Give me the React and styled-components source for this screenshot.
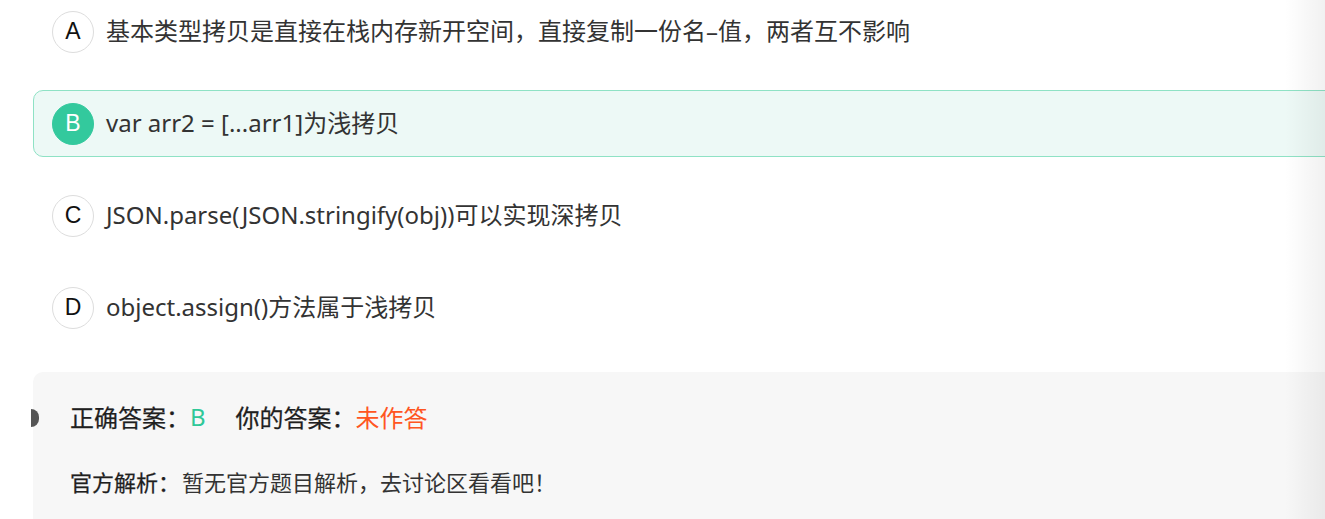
import React from "react";
import styled, { createGlobalStyle } from "styled-components";

const GlobalStyle = createGlobalStyle`
  html, body {
    margin: 0;
    padding: 0;
    background: #ffffff;
    overflow: hidden;
  }
  body {
    font-family: "Noto Sans", "Noto Sans CJK SC", sans-serif;
    color: #333333;
  }
`;

const Page = styled.div`
  position: relative;
  width: 1325px;
  height: 519px;
  overflow: hidden;
`;

const Content = styled.div`
  display: flex;
  flex-direction: column;
  margin-top: -2px;
  margin-left: 33px;
  margin-right: -40px;
`;

const OptionList = styled.div`
  display: flex;
  flex-direction: column;
  gap: 25px;
`;

const Option = styled.div`
  display: flex;
  align-items: center;
  box-sizing: border-box;
  height: 67px;
  padding-left: 18px;
  border: 1px solid ${(p) => (p.$selected ? "#8fe2c5" : "transparent")};
  border-radius: 10px;
  background: ${(p) => (p.$selected ? "#edf9f6" : "transparent")};
`;

const Badge = styled.span`
  box-sizing: border-box;
  flex: none;
  width: 42px;
  height: 42px;
  border-radius: 50%;
  display: flex;
  align-items: center;
  justify-content: center;
  margin-right: 12px;
  font-family: "Liberation Sans", Arial, sans-serif;
  font-size: 23px;
  line-height: 1;
  color: ${(p) => (p.$selected ? "#ffffff" : "#111111")};
  background: ${(p) => (p.$selected ? "#33c99d" : "#ffffff")};
  border: 1px solid ${(p) => (p.$selected ? "#33c99d" : "#dddddd")};
`;

const OptionText = styled.span`
  font-size: 24px;
  color: #333333;
  white-space: nowrap;
  padding-bottom: 4px;
`;

const Analysis = styled.div`
  position: relative;
  margin-top: 31px;
  background: #f7f7f7;
  border-radius: 10px 10px 0 0;
  padding: 27px 0 40px 37px;
  display: flex;
  flex-direction: column;
  gap: 31px;
`;

const Marker = styled.span`
  position: absolute;
  left: -2px;
  top: 37px;
  width: 8px;
  height: 18px;
  border-radius: 0 8px 8px 0;
  background: #555555;
`;

const Line = styled.div`
  display: flex;
  align-items: center;
  font-size: ${(p) => p.$size}px;
  white-space: nowrap;
`;

const Label = styled.span`
  font-weight: 400;
  color: #1f1f1f;
  -webkit-text-stroke: 0.25px #1f1f1f;
`;

const Value = styled.span`
  color: ${(p) => p.$color || "#333333"};
  margin-left: ${(p) => p.$before || 0}px;
  margin-right: ${(p) => p.$gap || 0}px;
`;

const EdgeShade = styled.div`
  position: absolute;
  top: 0;
  right: 0;
  width: 40px;
  height: 100%;
  pointer-events: none;
  background: linear-gradient(to right, rgba(0, 0, 0, 0), rgba(0, 0, 0, 0.055));
`;

const options = [
  { key: "A", text: "基本类型拷贝是直接在栈内存新开空间，直接复制一份名–值，两者互不影响" },
  { key: "B", text: "var arr2 = [...arr1]为浅拷贝", selected: true },
  { key: "C", text: "JSON.parse(JSON.stringify(obj))可以实现深拷贝" },
  { key: "D", text: "object.assign()方法属于浅拷贝" },
];

export default function App() {
  return (
    <Page>
      <GlobalStyle />
      <Content>
        <OptionList>
          {options.map((o) => (
            <Option key={o.key} $selected={o.selected}>
              <Badge $selected={o.selected}>{o.key}</Badge>
              <OptionText>{o.text}</OptionText>
            </Option>
          ))}
        </OptionList>
        <Analysis>
          <Marker />
          <Line $size={24}>
            <Label>正确答案：</Label>
            <Value $color="#2fc898" $before={0} $gap={30}>B</Value>
            <Label>你的答案：</Label>
            <Value $color="#ff5522">未作答</Value>
          </Line>
          <Line $size={22}>
            <Label>官方解析：</Label>
            <Value $before={2}>暂无官方题目解析，去讨论区看看吧！</Value>
          </Line>
        </Analysis>
      </Content>
      <EdgeShade />
    </Page>
  );
}
